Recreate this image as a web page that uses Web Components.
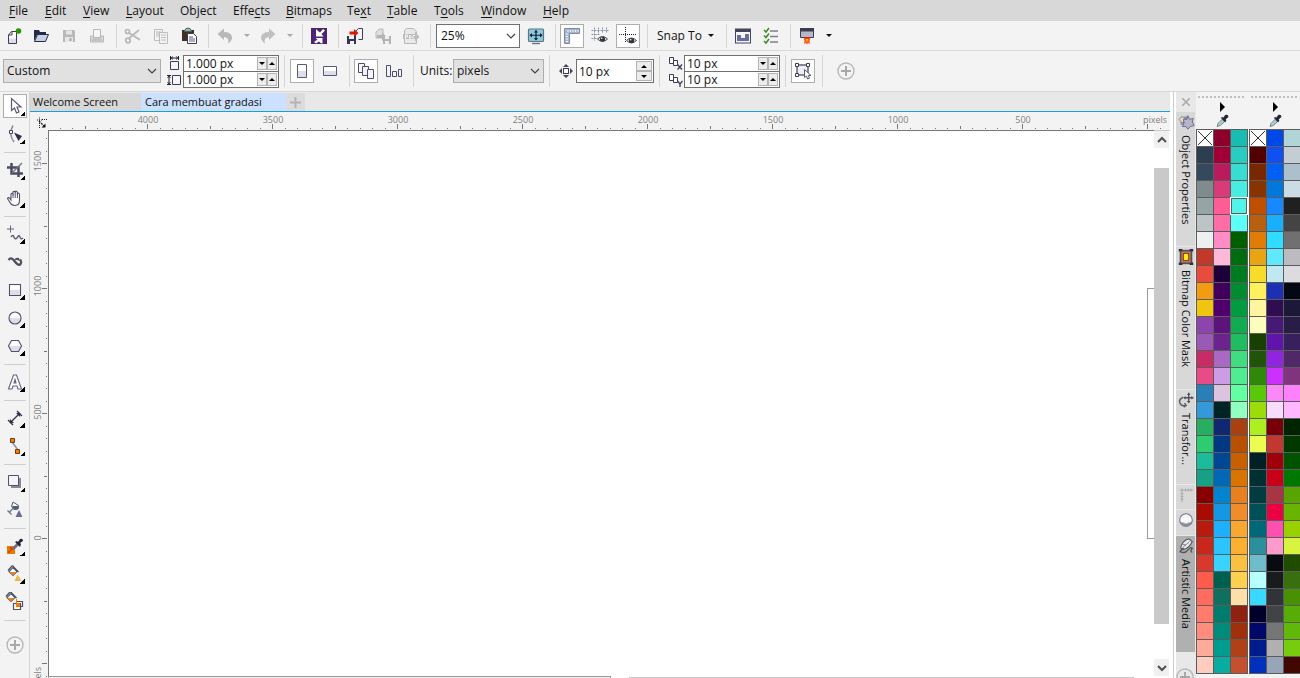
<!DOCTYPE html>
<html lang="en">
<head>
<meta charset="utf-8">
<title>Cara membuat gradasi</title>
<style>
  html, body { margin: 0; height: 100%; }
  body { font: 12px/16px "Open Sans", "Noto Sans", sans-serif; color: #111; background: #f3f3f3; overflow: hidden; }
</style>
</head>
<body>
<app-window></app-window>
<script>
const RESET = `
  :host { box-sizing: border-box; }
  :host([hidden]) { display: none; }
  *, *::before, *::after { box-sizing: border-box; }
  button, input, select { font: inherit; color: inherit; margin: 0; padding: 0; border: 0; border-radius: 0; background: none; outline: none; }
  button { display: block; }
`;

function define(name, css, html, setup) {
  const tpl = document.createElement('template');
  tpl.innerHTML = `<style>${RESET}${css}</style>${html}`;
  customElements.define(name, class extends HTMLElement {
    connectedCallback() {
      if (this.shadowRoot) return;
      const root = this.attachShadow({ mode: 'open' });
      root.append(tpl.content.cloneNode(true));
      if (setup) setup(this, root);
    }
  });
}

/* Icon set: every drawing lives on a 20 x 20 grid. */
const N = '#3c3c58', G = '#b8b8b8';
const EYE = (x, y) => `<g transform="translate(${x} ${y})"><path d="M0 4Q5-1 10 4Q5 9 0 4Z" fill="#ddd" stroke="#555" stroke-width="1"/><circle cx="5" cy="4" r="2.6" fill="#33333f"/><circle cx="4.2" cy="3.2" r=".8" fill="#fff"/></g>`;
const BUCKET = `<path d="M8 3.500 12 7.500 8 11.500 4 7.500Z" fill="#fff" stroke="#5a5a72" stroke-width="1.200"/><path d="M4.500 8h7L8 11.500Z" fill="#e8841c"/><path d="M3 6.500 7 2q2-.5 2 3M9 3.500l4.500 4.500" fill="none" stroke="#4a4a5c" stroke-width="1.300"/>`;
const ICONS = {
  'new': `<path d="M4.500 9 7.500 5.500H12.500V17.500H4.500Z" fill="#fff" stroke="${N}"/><path d="M4.500 9H8V5.500" fill="none" stroke="${N}"/><path d="M5 12.500h7V17H5Z" fill="#dcdcea"/><circle cx="14.500" cy="5" r="2.800" fill="#2c9400"/>`,
  'open': `<path d="M3 4h5l1 2h6v3H6l-3 6Z" fill="#262a48"/><path d="M6.500 8.500h11l-3 7H3.500Z" fill="#c8d0e4" stroke="#262a48"/>`,
  'save': `<path d="M4 4h11l1 1v11H4Z" fill="${G}"/><path d="M7 4.500h6v4H7ZM6 11h8v5H6Z" fill="#e6e6e6"/><path d="M10.500 12h2v3h-2Z" fill="#aaa"/>`,
  'print': `<path d="M6.500 3.500h7v8h-7Z" fill="#f6f6f6" stroke="${G}"/><path d="M3.500 10h3v2h7v-2h3v6h-13Z" fill="#d8d8d8" stroke="${G}"/><path d="M5 14h10" stroke="#aaa"/>`,
  'cut': `<g fill="none" stroke="#b8b8b8" stroke-width="1.700"><path d="M5 13 16 4M5.500 6.500 17 14"/><circle cx="4.500" cy="5.500" r="2"/><circle cx="5" cy="14.500" r="2.300"/></g>`,
  'copy': `<g fill="#f3f3f3" stroke="#bcbcbc"><path d="M3.500 3.500h8v11h-8Z"/><path d="M5 6h5M5 8h5M5 10h5"/><path d="M8.500 6.500h8v11h-8Z"/><path d="M10 9h5M10 11.500h5M10 14h5"/></g>`,
  'paste': `<path d="M3 4h12v11H3Z" fill="#403028"/><path d="M5.500 5.500Q6 2 9 2t3.500 3.500Z" fill="#9cb8ac" stroke="#50605c"/><path d="M8.500 7.500h6l3 3v7h-9Z" fill="#fff" stroke="${N}"/><path d="M10 11h4M10 13h6M10 15h6" stroke="#5c5c7c"/>`,
  'undo': `<path d="M2.500 8 9 2.500V6q7.500 0 8 5.500 0 3.500-4 6 1.500-6.500-4-6.500v3Z" fill="${G}"/>`,
  'redo': `<path d="M17.500 8 11 2.500V6q-7.500 0-8 5.500 0 3.500 4 6-1.500-6.500 4-6.500v3Z" fill="#c0c0c0"/>`,
  'connect': `<path d="M2 2h16v16H2Z" fill="#4c2474"/><path d="M7 3v7.500h7.500L12.500 8 16 4.500 14 3 11 6.500 8.500 4.500ZM13.500 17.500V12H6.500l2 1.500L5 16l2 1.500 3-2 1.500 1.500Z" fill="#fff"/>`,
  'import': `<path d="M10.500 12.500V5.500L13.500 2.500h4v11h-4" fill="#f4f4fa" stroke="${N}"/><path d="M4.500 5.500H9V3L13.500 7 9 11V8.500H4.500Z" fill="#dc1800"/><path d="M2 10h9v8H2Z" fill="#34344c"/><path d="M4 10h5v3H4ZM5 15h4v3H5Z" fill="#f0f0f8"/>`,
  'export': `<path d="M3 6 6 3h4v9H3Z" fill="#dedede" stroke="${G}"/><path d="M4 9h5V6.500L14 11l-5 4v-3H4Z" fill="#b4b4b4"/><path d="M10 10h8v8h-8Z" fill="#b4b4b4"/><path d="M12 10h4v3h-4ZM12 15h4v3h-4Z" fill="#efefef"/>`,
  'pdf': `<path d="M3.500 4.500 5.500 2.500h7l3 3v12h-12Z" fill="#e8e8e8" stroke="${G}"/><path d="M2 8h12V5.500L18.500 11 14 15.500V13H2Z" fill="#bdbdbd"/><path d="M4.500 13V9h2v2h-2M8.500 9.500v3h1q1.500-1.500 0-3h-1M12 13V9.500h2" fill="none" stroke="#f4f4f4"/>`,
  'full': `<rect x="2.500" y="3" width="15" height="12.500" rx="1" fill="#8ec8dc" stroke="#5c7484" stroke-width="1.200"/><path d="M6 17.500h8" stroke="#5c6c7c" stroke-width="1.300"/><path d="M4 9.250h12M10 4.500v9.500" stroke="#102030" stroke-width="1.200"/><path d="M6 7 3.500 9.250 6 11.500ZM14 7l2.500 2.250L14 11.500ZM8 6.500 10 4l2 2.500ZM8 12l2 2.500 2-2.500Z" fill="#102030"/>`,
  'ruler': `<path d="M2.500 2.500h15v5h-10v10h-5Z" fill="#a8b8cc" stroke="#7c8ca4"/><path d="M6 4v2M8.500 4v2M11 4v2M13.500 4v2M16 4v2M4 8h2M4 10.500h2M4 13h2M4 15.500h2" stroke="#f4f8ff"/>`,
  'grid': `<path d="M4.500 1.500v13M8.500 1.500v7M12.500 1.500v6M16.500 1.500v6M1.500 4.500h17M1.500 8.500h8M1.500 12.500h6" stroke="#8890a8" fill="none" stroke-dasharray="2 1"/>${EYE(7.5, 9)}`,
  'guide': `<path d="M7.500 1v16M1 8.500h17" stroke="#222" stroke-dasharray="1 1"/>${EYE(8.5, 10.5)}`,
  'options': `<rect x="2.500" y="3" width="15" height="14" fill="#f6f6fa" stroke="#44445c"/><path d="M2.500 3h15v3h-15Z" fill="#44445c"/><path d="M4 9h4v3h4V8h4v7H4Z" fill="#686ca0"/>`,
  'checks': `<path d="M9 5h8M9 10.500h8M9 16h8" stroke="#808088" stroke-width="1.400"/><path d="M3 4 5 6 8 2M3 9.500l2 2 3-4M3 15l2 2 3-4" fill="none" stroke="#3c8c24" stroke-width="1.500"/>`,
  'launch': `<path d="M3.500 2.500h13v9h-13Z" fill="#b4b8c8" stroke="#3c3c50"/><path d="M3 2h14v3.500H3Z" fill="#3c3c50"/><path d="M7.500 11h5v2h-5Z" fill="#dc2010"/><path d="M6.500 12.500h7l-1 2.500.5 3-2-1-1 1.500-1-1.500-2 1 .5-3Z" fill="#fc5c10"/><path d="M9 13h2l-1 3Z" fill="#ffe020"/>`,
  'portrait': `<path d="M5.500 3.500h9v13h-9Z" fill="#fff" stroke="#58587c"/><path d="M6 10h8v6H6Z" fill="#dedeea"/>`,
  'landscape': `<path d="M3.500 5.500h13v9h-13Z" fill="#fff" stroke="#58587c"/><path d="M4 10h12v4H4Z" fill="#dedeea"/>`,
  'pages': `<g fill="#f4f4fa" stroke="#4c4c6c"><path d="M2.500 2.500h6v9h-6Z"/><path d="M6.500 5.500h6v9h-6Z"/><path d="M11.500 8.500h6v9h-6Z"/></g>`,
  'page': `<g fill="#f4f4fa" stroke="#4c4c6c"><path d="M2.500 4.500h4v11h-4Z"/><path d="M8.500 10.500h4v5h-4Z"/><path d="M14.500 8.500h3v7h-3Z"/></g>`,
  'nudge': `<rect x="7.500" y="7.500" width="5" height="5" fill="#fff" stroke="${N}"/><path d="M7 6 10 3l3 3ZM7 14 10 17l3-3ZM6 7 3 10l3 3ZM14 7 17 10l-3 3Z" fill="#44445c"/>`,
  'treat': `<rect x="4" y="4" width="11" height="10" fill="#eeeef6" stroke="${N}" stroke-width="1.200"/><path d="M2.500 2.500h3v3h-3ZM13.500 2.500h3v3h-3ZM2.500 12.500h3v3h-3Z" fill="#fff" stroke="${N}"/><path d="M11.500 8.500v8l2-1.500 1.200 3 1.800-.8-1.200-2.700H18Z" fill="#fff" stroke="#5a5a78"/>`,
  'plus': `<circle cx="10" cy="10" r="8" fill="none" stroke="#b8b8b8" stroke-width="1.400"/><path d="M10 5v10M5 10h10" stroke="#a8a8a8" stroke-width="2"/>`,
  'width': `<path d="M6.500 8.500h8v8h-8Z" fill="#f4f4fa" stroke="${N}"/><path d="M6 5h9M6.500 3v4M14.500 3v4" stroke="#222"/><path d="M9 3.500 7 5l2 1.500M12 3.500 14 5l-2 1.500" fill="none" stroke="#222" stroke-width=".8"/>`,
  'height': `<path d="M8.500 5.500h8v9h-8Z" fill="#f4f4fa" stroke="${N}"/><path d="M5 5.500v9M3 5.500h4M3 14.500h4" stroke="#222"/><path d="M3.500 8 5 6l1.500 2M3.500 12 5 14l1.500-2" fill="none" stroke="#222" stroke-width=".8"/>`,
  'dupx': `<g fill="#fff" stroke="${N}"><path d="M4.500 4.500h4v6h-4Z"/><path d="M8.500 7.500h4v5h-4Z"/></g><path d="M12.500 11.500l4.500 5M17 11.500l-4.500 5" stroke="${N}" stroke-width="1.300"/>`,
  'dupy': `<g fill="#fff" stroke="${N}"><path d="M4.500 4.500h4v6h-4Z"/><path d="M8.500 7.500h4v5h-4Z"/></g><path d="M12.500 11l2.500 3 2.500-3M15 14v3" fill="none" stroke="${N}" stroke-width="1.300"/>`,
  'pick': `<path d="M6.500 2.500v12l3-2.500 2 5 2.500-1-2-5h4Z" fill="#fff" stroke="#5a5a78" stroke-width="1.200"/>`,
  'shape': `<path d="M8 1.500Q3 10 9 18" fill="none" stroke="#8c8ca4" stroke-width="1.500"/><path d="M4.500 6.500h3v3h-3Z" fill="#fff" stroke="#44445c"/><path d="M9 8.500l8 3.500-3.500 5Z" fill="#30304a"/>`,
  'crop': `<path d="M2 7.500h11.500V17M6.500 3v10.500h11.500" fill="none" stroke="#4c4c60" stroke-width="2.500"/><path d="M17 3 7 13" stroke="#6c7088" stroke-width="1.300"/>`,
  'hand': `<path d="M6 12V6q1-1.500 2 0V4q1-1.500 2.200 0V3.500q1.300-1 2.200.8V5.500q1.300-1 2.100.8v6q0 5-4.500 5.200-3.500 0-5-3L2.500 10.500q.5-1.500 2-.5Z" fill="#fff" stroke="#50506c" stroke-width="1.100"/><path d="M8 6v4M10.200 4v6M12.400 5v5" stroke="#50506c"/>`,
  'freehand': `<path d="M5.500 1.500v7M2 5h7" stroke="#686878"/><path d="M6 13q2-3 3 0t3 1q2-4 3-1 1 3 3 1" fill="none" stroke="#5c5c74" stroke-width="1.400"/>`,
  'artistic': `<path d="M3.500 8Q6 4.500 9 8.500T14.500 13Q17.500 11 15 7.500" fill="none" stroke="#50505f" stroke-width="2.200"/><path d="M9 8q2-3 5-2l1 3-3-1" fill="#50505f"/>`,
  'rect': `<path d="M4.500 4.500h11v11h-11Z" fill="#fff" stroke="#50506c" stroke-width="1.100"/><path d="M5 10h10v5H5Z" fill="#dedeea"/>`,
  'ellipse': `<circle cx="10" cy="10" r="6" fill="#fff"/><path d="M4 10h12a6 6 0 0 1-12 0Z" fill="#dedeea"/><circle cx="10" cy="10" r="6" fill="none" stroke="#50506c" stroke-width="1.100"/>`,
  'polygon': `<path d="M3.500 10 6.500 4.500h7L16.500 10l-3 5.500h-7Z" fill="#fff"/><path d="M3.500 10h13l-3 5.500h-7Z" fill="#dedeea"/><path d="M3.500 10 6.500 4.500h7L16.500 10l-3 5.500h-7Z" fill="none" stroke="#50506c" stroke-width="1.100"/>`,
  'text': `<path d="M3.500 17 8.500 3h3l5 14H13l-1-3H8l-1 3ZM9 11h2L10 7.500Z" fill="#fff" stroke="#64647c" stroke-width="1.100"/>`,
  'dim': `<path d="M5 15 15 5" stroke="#30304a" stroke-width="1.300"/><path d="M3 12l5 5M12 3l5 5" stroke="#30304a" stroke-width="1.300"/><path d="M5 11v4h4ZM11 5h4v4Z" fill="#30304a"/>`,
  'connector': `<path d="M7 6 13 14" stroke="#8c8ca4" stroke-width="1.400"/><path d="M5.500 2.500h4v4h-4ZM10.500 13.500h4v4h-4Z" fill="#f07c00" stroke="#703c18"/>`,
  'shadow': `<path d="M6 6h10v10H6Z" fill="#888898"/><path d="M3.500 3.500h10v10h-10Z" fill="#f4f4fa" stroke="#50506c"/>`,
  'transp': `<path d="M8 2 13.500 5.500 13 9 9 9.500 6.500 6.500Z" fill="#fff" stroke="#44546c"/><path d="M7 6l6.500 0L13 9 9 9.500Z" fill="#506074"/><path d="M8 8.500 4 12.500M2.500 10.500l4 4" stroke="#6c7488" stroke-width="1.300"/><path d="M14 10 17.500 17h-7Z" fill="#686c8c"/>`,
  'dropper': `<path d="M2 10h8v8H2Z" fill="#f07800"/><path d="M5 11l2 2-2 2M3 16h2" stroke="#a84800" stroke-width="1.400" fill="none"/><path d="M8 13l5-5" stroke="#707084" stroke-width="3"/><path d="M10 6l2-1 1 1 2-3q3-1 3 2l-3 2 1 1-1 3Z" fill="#26263c"/>`,
  'fill': `${BUCKET}<path d="M12.500 10.500 16.500 17h-7Z" fill="#f4b444"/>`,
  'smart': `<g transform="translate(-2 -2)">${BUCKET}</g><path d="M8.500 11.500h7v6h-7ZM11.500 9.500h6v5h-6Z" fill="#fff" stroke="#50506c" stroke-width="1.200"/><path d="M11 11h4v4h-4Z" fill="#f07c00"/><path d="M11.500 7v6" stroke="#f07c00"/>`,
  'origin': `<path d="M7 8h6M9.500 5.500v5" stroke="#222" stroke-dasharray="1 1"/><path d="M9 9l5.500 5.500" stroke="#111" stroke-dasharray="2 1" stroke-width="1.300"/><path d="M15.500 11.500v4h-4Z" fill="#111"/><path d="M12 7.500h5M9.500 11v5" fill="none" stroke="#222" stroke-dasharray="1 1"/>`,
  'props': `<path d="M4 4h9v9H4Z" fill="#8890ac"/><path d="M2 7l4-3 3 3-3 4Z" fill="#f0dca8" stroke="#7c8098" stroke-width=".8"/><path d="M12 3l2 4 4-1-1 4 2 4-4 1-3 3-2-3-4 0 2-4-1-4 4 0Z" fill="#b4b4cc" stroke="#66687f"/>`,
  'mask': `<path d="M3 2h14v16H3Z" fill="#54505c"/><path d="M5 4h10v12H5Z" fill="#dc7850"/><path d="M7 6h6v8H7Z" fill="#ffec10" stroke="#503018"/><path d="M3 4V2h3M14 2h3v2M3 16v2h3M14 18h3v-2" fill="none" stroke="#302c38" stroke-width="2"/>`,
  'transform': `<path d="M13 2v11M8 7.500h10" stroke="#50505c" stroke-width="1.500"/><path d="M11 4.500 13 2l2 2.500ZM11 11l2 2.500 2-2.500ZM9.500 5.500 7 7.500l2.500 2ZM16 5.500l2.500 2-2.500 2Z" fill="#50505c"/><path d="M7 7q-5 2-4 6 2 4.500 7 3l-1.500-2.500M10 16l-2.500 2" fill="none" stroke="#5c5c68" stroke-width="1.700"/>`,
  'guides': `<path d="M3 4.500h15M5.500 3v15M9.500 3v3M12.500 3v3M15.500 3v3M4 8.500h3M4 11.500h3M4 14.500h3" stroke="#a4a4ac" fill="none"/>`,
  'lens': `<circle cx="10" cy="10" r="7" fill="#f8f8fa" stroke="#777786" stroke-width="1.200"/><path d="M3.500 12q6.500 4 13 0-1.500 5.500-6.500 5.500t-6.500-5.500Z" fill="#8c8c98"/><path d="M5 12.500q5 3 10 0" stroke="#b8b8c4" fill="none"/>`,
  'media': `<path d="M4 12Q6 4 13 2l4 3Q14 12 7 14Z" fill="#e8e8ee" stroke="#555562" stroke-width="1.200"/><path d="M3 17q2-4 5-4M4 16.500q5 2 8-2t5-2q-3 4 0 4.500" fill="none" stroke="#555562" stroke-width="1.500"/><path d="M6 12l8-7M6 8l4 1" stroke="#777"/>`,
  'eyedrop': `<path d="M4 17l1-4L10 8l3 3-5 4.500Z" fill="#a8d4c8" stroke="#607078"/><path d="M8.500 6l2-1 1 1L14 2.500q4-1.500 4 2.500L14.500 8l1 1-1.500 3Z" fill="#24243a"/>`
};

define('ui-icon', `
  :host { display: inline-block; width: 20px; height: 20px; flex: none; }
  svg { display: block; width: 100%; height: 100%; }
`, `<svg viewBox="0 0 20 20" aria-hidden="true"></svg>`, (host, root) => {
  root.querySelector('svg').innerHTML = ICONS[host.getAttribute('name')] || '';
});

define('tool-button', `
  :host { display: flex; width: 28px; height: 28px; align-items: center; justify-content: center; flex: none; }
  button { position: relative; display: flex; align-items: center; justify-content: center; width: 24px; height: 24px; border: 1px solid transparent; }
  :host([active]) button { background: #fff; border-color: #adadad; }
  :host([flyout]) button::after { content: ""; position: absolute; right: 1px; bottom: 1px; border: solid transparent; border-width: 5px 0 0 5px; width: 0; height: 0; background: linear-gradient(135deg, transparent 50%, #000 50%) border-box; }
`, `<button type="button"><ui-icon></ui-icon></button>`, (host, root) => {
  root.querySelector('button').setAttribute('aria-label', host.getAttribute('label'));
  const icon = document.createElement('ui-icon');
  icon.setAttribute('name', host.getAttribute('icon'));
  root.querySelector('ui-icon').replaceWith(icon);
});

define('caret-button', `
  :host { display: flex; width: 15px; height: 28px; flex: none; }
  button { width: 100%; display: grid; place-items: center; }
  i { border: 3px solid transparent; border-top-color: #111; border-bottom: 0; }
  :host([dim]) i { border-top-color: #a8a8a8; }
`, `<button type="button" aria-label="More"><i></i></button>`);

define('tool-sep', `
  :host { display: block; flex: none; width: 8px; height: 24px; padding-left: 5px; }
  i { display: block; width: 1px; height: 100%; background: #d4d4d4; }
`, `<i></i>`);

define('drop-down', `
  :host { display: block; position: relative; flex: none; height: 24px; }
  select { appearance: none; width: 100%; height: 100%; padding: 0 24px 0 3px; border: 1px solid #adadad; background: #e1e1e1; }
  :host([light]) select { background: #fff; border-color: #707070; padding-left: 4px; }
  svg { position: absolute; right: 4px; top: 8px; width: 10px; height: 8px; pointer-events: none; }
`, `<select></select><svg viewBox="0 0 10 8"><path d="M1 2 5 6 9 2" fill="none" stroke="#444" stroke-width="1.200"/></svg>`, (host, root) => {
  const s = root.querySelector('select');
  s.setAttribute('aria-label', host.getAttribute('label'));
  s.add(new Option(host.getAttribute('value')));
});

define('spin-field', `
  :host { display: flex; height: 17px; width: 96px; background: #fff; border: 1px solid #707070; flex: none; }
  input { flex: 1; min-width: 0; padding-left: 2px; height: 100%; line-height: 14px; }
  div { display: flex; padding: 1px; }
  button { display: grid; place-items: center; width: 10px; background: #ececec; border: 1px solid #b4b4b4; }
  i { border: 3px solid transparent; border-top-color: #000; border-bottom: 0; }
  i.up { border-top: 0; border-bottom: 3px solid #000; }
  :host([tall]) { height: 24px; width: 78px; }
  :host([tall]) div { flex-direction: column-reverse; }
  :host([tall]) button { width: 16px; flex: 1; }
`, `<input type="text"><div><button type="button" aria-label="Decrease"><i></i></button><button type="button" aria-label="Increase"><i class="up"></i></button></div>`, (host, root) => {
  const f = root.querySelector('input');
  f.value = host.getAttribute('value');
  f.setAttribute('aria-label', host.getAttribute('label'));
});

define('menu-bar', `
  :host { display: block; background: #d8d8d8; }
  nav { display: grid; grid-template-columns: 36px 38px 43px 54px 53px 53px 61px 40px 47px 47px 62px 44px; padding-left: 9px; }
  button { height: 21px; text-align: left; white-space: nowrap; }
  u { text-underline-offset: 2px; }
`, `<nav aria-label="Main menu">
  <button type="button"><u>F</u>ile</button><button type="button"><u>E</u>dit</button><button type="button"><u>V</u>iew</button>
  <button type="button"><u>L</u>ayout</button><button type="button">Ob<u>j</u>ect</button><button type="button">Effe<u>c</u>ts</button>
  <button type="button"><u>B</u>itmaps</button><button type="button">Te<u>x</u>t</button><button type="button"><u>T</u>able</button>
  <button type="button">T<u>o</u>ols</button><button type="button"><u>W</u>indow</button><button type="button"><u>H</u>elp</button>
</nav>`);

define('standard-bar', `
  :host { display: flex; align-items: center; height: 30px; border-bottom: 1px solid #d8d8d8; background: #f3f3f3; }
  drop-down { width: 84px; margin: 0 2px 0 3px; }
  .first { width: 27px; }
  .snap { display: flex; align-items: center; justify-content: space-between; width: 71px; height: 28px; padding: 0 7px; white-space: nowrap; }
  .snap i { border: 3px solid transparent; border-top-color: #111; border-bottom: 0; }
`, `
  <tool-button class="first" icon="new" label="New"></tool-button><tool-button icon="open" label="Open"></tool-button><tool-button icon="save" label="Save"></tool-button><tool-button icon="print" label="Print"></tool-button><tool-sep></tool-sep>
  <tool-button icon="cut" label="Cut"></tool-button><tool-button icon="copy" label="Copy"></tool-button><tool-button icon="paste" label="Paste"></tool-button><tool-sep></tool-sep>
  <tool-button icon="undo" label="Undo"></tool-button><caret-button dim></caret-button><tool-button icon="redo" label="Redo"></tool-button><caret-button dim></caret-button><tool-sep></tool-sep>
  <tool-button icon="connect" label="Search content"></tool-button><tool-sep></tool-sep>
  <tool-button icon="import" label="Import"></tool-button><tool-button icon="export" label="Export"></tool-button><tool-button icon="pdf" label="Publish to PDF"></tool-button><tool-sep></tool-sep>
  <drop-down light value="25%" label="Zoom level"></drop-down><tool-button icon="full" label="Full-screen preview"></tool-button><tool-sep></tool-sep>
  <tool-button active icon="ruler" label="Show rulers"></tool-button><tool-button icon="grid" label="Show grid"></tool-button><tool-button active icon="guide" label="Show guidelines"></tool-button><tool-sep></tool-sep>
  <button type="button" class="snap">Snap To <i></i></button><tool-sep></tool-sep>
  <tool-button icon="options" label="Welcome screen"></tool-button><tool-button icon="checks" label="Options"></tool-button><tool-sep></tool-sep>
  <tool-button icon="launch" label="Application launcher"></tool-button><caret-button></caret-button>`);

define('property-bar', `
  :host { display: flex; align-items: center; height: 41px; border-bottom: 1px solid #d8d8d8; background: #f3f3f3; padding-left: 3px; }
  .pair { display: grid; grid-template-columns: 16px 96px; width: 112px; margin-left: 6px; }
  .pair spin-field + ui-icon + spin-field { margin-top: -1px; }
  .pair ui-icon { margin: -2px -1px -2px -3px; }
  .preset { width: 158px; }
  .units { width: 91px; }
  .cap { width: 33px; margin-left: 4px; white-space: nowrap; }
  .nudge { margin-left: 4px; }
  tool-sep { height: 32px; }
  .add { margin-left: 7px; }
  .gap { margin-right: 1px; }
`, `
  <drop-down class="preset" value="Custom" label="Page size"></drop-down>
  <div class="pair"><ui-icon name="width"></ui-icon><spin-field value="1.000 px" label="Page width"></spin-field><ui-icon name="height"></ui-icon><spin-field value="1.000 px" label="Page height"></spin-field></div>
  <tool-sep class="gap"></tool-sep>
  <tool-button active icon="portrait" label="Portrait"></tool-button><tool-button icon="landscape" label="Landscape"></tool-button><tool-sep></tool-sep>
  <tool-button active icon="pages" label="All pages"></tool-button><tool-button icon="page" label="Current page"></tool-button><tool-sep></tool-sep>
  <span class="cap">Units:</span><drop-down class="units" value="pixels" label="Units"></drop-down>
  <tool-sep></tool-sep><ui-icon class="nudge" name="nudge"></ui-icon><spin-field tall value="10 px" label="Nudge distance"></spin-field>
  <tool-sep></tool-sep>
  <div class="pair"><ui-icon name="dupx"></ui-icon><spin-field value="10 px" label="Duplicate distance X"></spin-field><ui-icon name="dupy"></ui-icon><spin-field value="10 px" label="Duplicate distance Y"></spin-field></div>
  <tool-sep class="gap"></tool-sep><tool-button active icon="treat" label="Treat as filled"></tool-button><tool-sep></tool-sep>
  <tool-button class="add" icon="plus" label="Quick customize"></tool-button>`);

define('tool-box', `
  :host { display: flex; flex-direction: column; align-items: center; width: 30px; border-right: 1px solid #d4d4d4; background: #f3f3f3; overflow: hidden; }
  hr { flex: none; width: 22px; height: 1px; margin: 4px 0 3px; border: 0; background: #d0d0d0; }
  .add { margin-top: 7px; }
`, [['pick','shape'],['crop','hand'],['freehand','artistic','rect','ellipse','polygon'],['text'],['dim','connector'],['shadow','transp'],['dropper','fill','smart']]
  .map(g => g.map(n => `<tool-button icon="${n}" label="${n}"${n === 'pick' ? ' active' : ''}${['artistic','transp','smart'].includes(n) ? '' : ' flyout'}></tool-button>`).join('')).join('<hr>')
  + `<hr><tool-button class="add" icon="plus" label="Quick customize"></tool-button>`);

define('doc-tabs', `
  :host { display: flex; height: 20px; background: #e8e8e8; border-bottom: 1px solid #18a0dc; padding-top: 1px; font-size: 11px; }
  button { height: 18px; padding: 0 0 0 3px; width: 111px; text-align: left; background: #d8d8d8; white-space: nowrap; }
  button[aria-selected=true] { width: 145px; padding-left: 4px; background: #cce0ff; }
  .add { display: grid; place-items: center; width: 19px; padding: 0; background: #dcdcdc; }
  svg { width: 11px; height: 11px; }
`, `<button type="button" role="tab" aria-selected="false">Welcome Screen</button><button type="button" role="tab" aria-selected="true">Cara membuat gradasi</button><button type="button" class="add" aria-label="New document"><svg viewBox="0 0 11 11"><path d="M5.500 0v11M0 5.500h11" stroke="#b4b4b4" stroke-width="2"/></svg></button>`);

/* Rulers: one unit label every 125px, a dot every tenth of that. */
function ticks(origin, from, to, line) {
  let out = '';
  for (let i = from; i <= to; i++) {
    const p = Math.round(origin + i * 12.5), k = ((i % 10) + 10) % 10;
    out += line(p, k === 0 ? 5 : k === 5 ? 3 : 1);
  }
  return out;
}
define('ruler-top', `
  :host { display: block; height: 18px; background: #f3f3f3; }
  svg { display: block; width: 100%; height: 18px; }
  text { font-size: 9px; fill: #808080; text-anchor: middle; }
`, `<svg></svg>`, (host, root) => {
  let s = ticks(99, -7, 400, (p, h) => `<path d="M${p}.5 ${17 - h}v${h}" stroke="#777"/>`);
  for (let v = 4000, x = 100; v >= 500; v -= 500, x += 125) s += `<text x="${x}" y="11">${v}</text>`;
  root.querySelector('svg').innerHTML = s + `<text x="100%" dx="-3" y="11" style="text-anchor:end">pixels</text>`;
});
define('ruler-side', `
  :host { display: block; width: 18px; background: #f3f3f3; overflow: hidden; }
  svg { display: block; width: 18px; height: 100%; }
  text { font-size: 9px; fill: #808080; text-anchor: middle; }
`, `<svg></svg>`, (host, root) => {
  let s = ticks(33, -2, 120, (p, h) => `<path d="M${17 - h} ${p}.5h${h}" stroke="#777"/>`);
  [['1500', 31], ['1000', 156], ['500', 282], ['0', 408], ['pixels', 549]].forEach(([t, y]) => s += `<text transform="translate(11 ${y}) rotate(-90)">${t}</text>`);
  root.querySelector('svg').innerHTML = s;
});

define('scroll-bar', `
  :host { display: flex; flex-direction: column; justify-content: space-between; background: #fff; }
  button { display: grid; place-items: center; width: 15px; height: 17px; background: #f0f0f0; }
  .thumb { width: 15px; flex: 1; margin: 20px 0 35px; background: #c9c9c9; }
  svg { width: 10px; height: 8px; }
`, `<button type="button" aria-label="Scroll up"><svg viewBox="0 0 10 8"><path d="M1 6 5 2 9 6" fill="none" stroke="#505050" stroke-width="2"/></svg></button><div class="thumb"></div><button type="button" aria-label="Scroll down"><svg viewBox="0 0 10 8"><path d="M1 2 5 6 9 2" fill="none" stroke="#505050" stroke-width="2"/></svg></button>`);

define('document-view', `
  :host { display: flex; flex-direction: column; min-width: 0; min-height: 0; }
  .view { flex: 1; min-height: 0; display: grid; grid-template-columns: 18px minmax(0, 1fr) 16px; grid-template-rows: 18px minmax(0, 1fr) 2px; background: #f3f3f3; }
  ruler-top { grid-column: 2 / 4; }
  ruler-side { grid-row: 2 / 4; }
  .canvas { position: relative; background: #fff; border: solid #777; border-width: 1px 0 0 1px; overflow: hidden; }
  .page { position: absolute; left: 1098px; top: 157px; right: 0; height: 251px; border: 1px solid #999; border-right: 0; }
  scroll-bar { border-top: 1px solid #ccc; }
  .foot { grid-column: 2 / 4; display: flex; background: #fff; }
  .pages { width: 563px; border: solid #999; border-width: 1px 1px 0 1px; background: #f3f3f3; }
  .hbar { flex: 1; margin: 1px 36px 0 18px; background: #c9c9c9; }
`, `<doc-tabs role="tablist"></doc-tabs>
  <div class="view">
    <ui-icon name="origin"></ui-icon><ruler-top></ruler-top>
    <ruler-side></ruler-side><div class="canvas"><div class="page"></div></div><scroll-bar></scroll-bar>
    <div class="foot"><div class="pages"></div><div class="hbar"></div></div>
  </div>`);

define('docker-tab', `
  :host { display: block; flex: none; margin-bottom: 1px; font-size: 11px; }
  button { display: flex; flex-direction: column; align-items: center; gap: 3px; width: 100%; height: 100%; background: #d8d8d8; }
  :host([selected]) button { background: #b0b0b0; }
  ui-icon { width: 18px; height: 20px; }
  span { writing-mode: vertical-rl; white-space: nowrap; }
`, `<button type="button"><ui-icon></ui-icon><span><slot></slot></span></button>`, (host, root) => {
  const icon = document.createElement('ui-icon');
  icon.setAttribute('name', host.getAttribute('icon'));
  root.querySelector('ui-icon').replaceWith(icon);
  if (!host.textContent) root.querySelector('button').setAttribute('aria-label', host.getAttribute('label'));
});

define('docker-rail', `
  :host { display: flex; flex-direction: column; width: 26px; padding-right: 1px; background: linear-gradient(90deg, #fff 3px, #ccc 3px, #ccc 4px, #fff 4px, #fff 6px, #e8e8e8 6px); overflow: hidden; }
  docker-tab, .close { margin-left: 6px; }
  .close { flex: none; display: grid; place-items: center; height: 20px; }
  .close svg { width: 8px; height: 8px; }
  .a { height: 134px; } .b { height: 142px; } .c { height: 94px; } .d { height: 24px; } .e { height: 25px; } .f { height: 116px; }
  .add { margin: 10px 0 0 1px; }
`, `<button type="button" class="close" aria-label="Close dockers"><svg viewBox="0 0 8 8"><path d="M0 0 8 8M8 0 0 8" stroke="#a8a8a8" stroke-width="1.500"/></svg></button>
  <docker-tab class="a" icon="props">Object Properties</docker-tab>
  <docker-tab class="b" icon="mask">Bitmap Color Mask</docker-tab>
  <docker-tab class="c" icon="transform">Transfor...</docker-tab>
  <docker-tab class="d" icon="guides" label="Guidelines"></docker-tab>
  <docker-tab class="e" icon="lens" label="Lens"></docker-tab>
  <docker-tab class="f" icon="media" selected>Artistic Media</docker-tab>
  <tool-button class="add" icon="plus" label="Quick customize"></tool-button>`);

const PALETTES = {
  document: [
    'none 2c3e50 34495e 7f8c8d 95a5a6 bdc3c7 ecf0f1 c0392b e74c3c f39c12 f1c40f 8e44ad 9b59b6 c72c66 e94b86 2980b9 3498db 27ae60 2ecc71 1abc9c 16a085 860000 a80b00 b81a0e c8281b d8392c fd5c4c ff6b5e ff7c6c ff8c7c ffab9c ffcdbf',
    '8c0029 a00036 b81c5c d93a78 ff5c96 ff6ca6 ff8cc6 ffb8d8 1e0038 40005c 50006c 5c147c 6c248c a868c4 cc9ce4 dcc4e0 002424 102870 003884 004894 0068b4 0084d0 1498e4 1cb0ff 2cc4ff 38d4ff 006050 107060 007c6c 008c7c 009c90 08aca0',
    '18bcb0 28ccc0 38dcd0 48ece0 50f4e8 5cfff8 006000 006c10 007c20 008c30 009c40 10ac50 20bc60 40dc80 50ec90 60ffa0 90ffc0 a84010 b85000 c86000 d87400 e88020 f08c2c f8a830 fcb030 fcc040 fcd050 fce0a8 902010 a03008 b04018 c4502c'],
  custom: [
    'none 500000 782800 883400 c05000 b86010 e07c08 e8a414 f8dc2c fff060 fff4a0 fcfcbc 184000 205408 308808 58c808 9cdc08 acf020 ecfc50 002024 003034 003c40 005058 006878 2c909c 70bccc b8ffff 38d8ff 000028 000868 001c8c 0030bc',
    '0048e8 1050f0 0060f4 0078dc 1888ff 18b0fc 30dcff 60e8fc c0e8f0 1c30b4 300c50 481878 6014ac 9024e0 cc30fc fc88f8 f8dcfc 780008 c03830 a00008 c80018 a83444 ec0044 ff50b0 fc9ccc 080c10 181c1c 303438 404444 747678 b0b0b0 98a4b8',
    'b0d4d8 c4ccd4 acc0cc ccdce4 202020 444444 707070 bcbcc0 dcdce0 040814 1c1838 281c48 38205c 502868 80347c ff80fc ffb8ff 002400 003800 005400 007800 58a400 68b400 98d000 d8f440 204c00 387010 489004 58ac08 60b808 78cc10 400800']
};

define('color-palette', `
  :host { display: block; width: 52px; flex: none; }
  .grip { height: 2px; margin: 4px 2px 4px; background: repeating-linear-gradient(90deg, #c0c0c0 0 2px, transparent 2px 4px); }
  .flyout, .pickup { display: grid; place-items: center; width: 100%; }
  .flyout { height: 10px; }
  .flyout i { border: 5px solid transparent; border-left-color: #000; border-right: 0; }
  .pickup { height: 17px; }
  .pickup ui-icon { width: 16px; height: 16px; }
  .grid { display: grid; grid: repeat(32, 16px) / auto-flow 16px; gap: 1px; padding: 1px; background: #5c5c5c; }
  .grid button { width: 16px; height: 16px; }
  .grid svg { display: block; width: 16px; height: 16px; background: #fff; }
  .grid .picked { box-shadow: 0 0 0 1px #fff, inset 0 0 0 1px #5c5c5c; }
`, `<div class="grip"></div><button type="button" class="flyout" aria-label="Palette menu"><i></i></button><button type="button" class="pickup" aria-label="Pick a colour"><ui-icon name="eyedrop"></ui-icon></button><div class="grid"></div>`, (host, root) => {
  const grid = root.querySelector('.grid');
  PALETTES[host.getAttribute('set')].join(' ').split(' ').forEach(c => {
    const b = document.createElement('button');
    b.type = 'button';
    b.setAttribute('aria-label', c === 'none' ? 'No colour' : '#' + c);
    if (c === 'none') b.innerHTML = '<svg viewBox="0 0 16 16"><path d="M1 1 15 15M15 1 1 15" stroke="#333"/></svg>';
    else b.style.background = '#' + c;
    if (c === '50f4e8') b.className = 'picked';
    grid.append(b);
  });
});

define('app-window', `
  :host { display: flex; flex-direction: column; height: 100vh; overflow: hidden; }
  main { flex: 1; min-height: 0; display: grid; grid-template-columns: 30px minmax(0, 1fr) 26px 104px; }
  .palettes { display: flex; gap: 1px; overflow: hidden; background: #f3f3f3; }
`, `<menu-bar></menu-bar><standard-bar></standard-bar><property-bar></property-bar>
  <main><tool-box></tool-box><document-view></document-view><docker-rail></docker-rail>
  <div class="palettes"><color-palette set="document"></color-palette><color-palette set="custom"></color-palette></div></main>`);
</script>
</body>
</html>
